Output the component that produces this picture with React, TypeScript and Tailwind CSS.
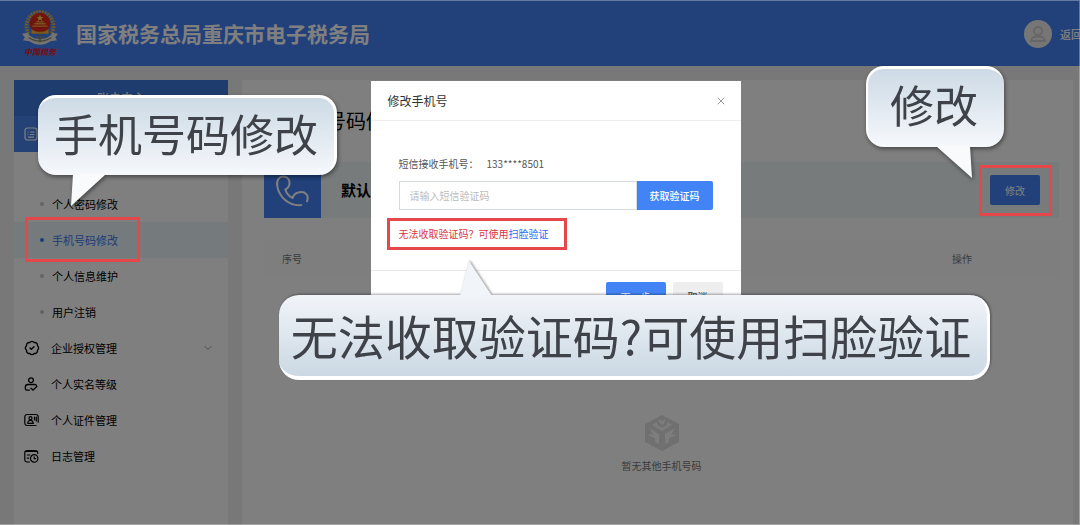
import React from "react";
import { BadgeCheck, ChevronDown, X } from "lucide-react";

function Emblem() {
  return (
    <svg viewBox="0 0 40 38" className="h-9 w-10" aria-hidden="true">
      <path d="M8 25C2 15 9 2 20 2s18 13 12 23" fill="none" stroke="#d9b35a" strokeWidth="4" strokeDasharray="2 1" />
      <circle cx="20" cy="14" r="11" fill="#e0281c" />
      <path d="M20 5l1 2.500h2.600l-2 1.600.8 2.500L20 10.100l-2.400 1.500.8-2.500-2-1.600H19z" fill="#ffd84a" />
      <path d="M12 17h16M14 14.500h12M16 12.500h8" stroke="#f5a53a" strokeWidth="1.500" />
      <path d="M11 20c4 4 14 4 18 0v5H11z" fill="#f5b830" />
      <path d="M1 25l6-1 2 3c6 5 16 5 22 0l2-3 6 1-3 4 2 3-7 1c-7 5-15 5-22 0l-7-1 2-3z" fill="#e9e9e4" />
      <path d="M8 29c7 5 17 5 24 0M20 26v8M16 28l4 3 4-3" fill="none" stroke="#8f8a6e" strokeWidth="1.500" />
    </svg>
  );
}

function PhoneIcon() {
  return (
    <svg viewBox="12 -9 171 168" className="h-14 w-[57px]" fill="none" stroke="#ffffff" strokeWidth="6" strokeLinecap="round" strokeLinejoin="round" aria-hidden="true">
      <path d="M141 109C148 92 136 78 118 82C106 84 100 91 98 99C89 95 80 86 76 74C94 64 92 39 74 35C58 32 48 46 52 64C57 96 88 124 124 120" />
    </svg>
  );
}

function ListIcon() {
  return (
    <svg viewBox="0 0 14 14" className="size-3.5 shrink-0" fill="none" stroke="currentColor" strokeWidth="1.200" aria-hidden="true">
      <rect x="1" y="1" width="12" height="12" rx="2.500" />
      <path d="M3.500 5h1M6 5h4.500M3.500 7.500h1M6 7.500h4.500M4 10.200h6" />
    </svg>
  );
}

function PersonCheckIcon() {
  return (
    <svg viewBox="0 0 14 14" className="size-3.5 shrink-0" fill="none" stroke="currentColor" strokeWidth="1.300" strokeLinecap="round" aria-hidden="true">
      <circle cx="7" cy="3.200" r="2.400" />
      <path d="M11 7.500H4A2.700 2.700 0 0 0 1.300 10v1.500c0 1 .6 1.600 1.600 1.600H5.500M7 11.200l2 1.800 3.800-3.500M11 7.500c1 0 1.600.5 1.800 2" />
    </svg>
  );
}

function IdCardIcon() {
  return (
    <svg viewBox="0 0 15 14" className="h-3.5 w-[15px] shrink-0" fill="none" stroke="currentColor" strokeWidth="1.200" strokeLinecap="round" aria-hidden="true">
      <path d="M12 12.500H3A2.200 2.200 0 0 1 .8 10.300V3.700A2.200 2.200 0 0 1 3 1.500h9a2.200 2.200 0 0 1 2.200 2.200v5.500" />
      <circle cx="6.500" cy="5.200" r="1.500" />
      <path d="M3.800 10.300h5.400c0-2-1-3-2.700-3s-2.700 1-2.700 3zM10.500 4v3M12.300 4v4" />
    </svg>
  );
}

function LogIcon() {
  return (
    <svg viewBox="0 0 15 14" className="h-3.5 w-[15px] shrink-0" fill="none" stroke="currentColor" strokeWidth="1.200" strokeLinecap="round" aria-hidden="true">
      <path d="M5.500 13H3A2.200 2.200 0 0 1 .8 10.800V3.700A2.200 2.200 0 0 1 3 1.500h8.500a2.200 2.200 0 0 1 2.200 2.200v.8M.8 2.500h12.900M3.300 6h2.500M3.300 9.200h1.400" />
      <circle cx="10.200" cy="9.400" r="3.700" />
      <path d="M10.200 7.800v1.800h1.500" />
    </svg>
  );
}

function EmptyBox() {
  return (
    <svg viewBox="0 0 36 38" className="h-[38px] w-9" aria-hidden="true">
      <path d="M18 1l17 9v18l-17 9-17-9V10z" fill="#e0e0e0" />
      <path d="M18 11l-3-3v-3l3 2 3-2v3zM8 11l5-3v3l5 3 5-3V8l5 3-10 6zM5 14l10 6v10l-4-2v-4l-6-2v-2l4 1zM31 14l-10 6v10l4-2v-4l6-2v-2l-4 1z" fill="#fafafa" />
    </svg>
  );
}

const subItems = ["个人密码修改", "手机号码修改", "个人信息维护", "用户注销"];

const groups = [
  { label: "企业授权管理", icon: <BadgeCheck className="size-4 shrink-0" />, more: true },
  { label: "个人实名等级", icon: <PersonCheckIcon />, more: false },
  { label: "个人证件管理", icon: <IdCardIcon />, more: false },
  { label: "日志管理", icon: <LogIcon />, more: false },
];

function Header() {
  return (
    <header className="flex h-[66px] items-center bg-[#4482f4] pt-0.5 pl-5 text-white">
      <div className="flex flex-col items-center">
        <Emblem />
        <span className="text-[8px] leading-3 font-bold text-[#e02020] italic">中国税务</span>
      </div>
      <h1 className="flex-1 pl-4 text-[21px] font-bold whitespace-nowrap">国家税务总局重庆市电子税务局</h1>
      <div className="flex size-7 items-center justify-center rounded-full bg-[#ececec]">
        <svg viewBox="0 0 18 18" className="size-[18px]" fill="none" stroke="#cccccc" strokeWidth="1.800" aria-hidden="true">
          <circle cx="9" cy="6" r="4" />
          <path d="M2 16c.5-3 3-4.500 5-4.500h4c2 0 4.500 1.500 5 4.500z" />
        </svg>
      </div>
      <a href="#" className="ml-2 w-5 overflow-hidden text-[11px] font-medium whitespace-nowrap">返回</a>
    </header>
  );
}

function Sidebar() {
  return (
    <aside className="w-[214px] shrink-0 bg-white text-[11px] text-black">
      <h2 className="flex h-9 items-center justify-center bg-[#3f78dc] text-xs leading-4 font-medium text-white">账户中心</h2>
      <div className="flex h-9 items-center bg-[#4a84ee] pl-2.5 text-white">
        <ListIcon />
      </div>
      <nav className="pt-[34px]">
        {subItems.map((label) => {
          const active = label === "手机号码修改";
          return (
            <a
              key={label}
              href="#"
              className={
                active
                  ? "flex h-9 items-center gap-2 bg-[#eaf4fb] pl-[26px] text-[#3b78f0]"
                  : "flex h-9 items-center gap-2 pl-[26px]"
              }
            >
              <i className={active ? "size-1 rounded-full bg-[#3b78f0]" : "size-1 rounded-full bg-[#c8c8c8]"} />
              {label}
            </a>
          );
        })}
        {groups.map((group) => (
          <a key={group.label} href="#" className="flex h-9 items-center pr-3.5 pl-2.5">
            <span className="flex w-[27px]">{group.icon}</span>
            <span className="flex-1">{group.label}</span>
            {group.more && <ChevronDown className="size-3 text-[#999999]" />}
          </a>
        ))}
      </nav>
    </aside>
  );
}

function PhonePanel() {
  return (
    <main className="min-w-0 flex-1 bg-white pr-3.5 pl-[22px] text-black">
      <h2 className="flex h-[82px] items-center pl-[22px] text-xl">手机号码修改</h2>
      <section className="flex items-center bg-[#eef6f8] pr-[19px]">
        <div className="bg-[#4482f4]">
          <PhoneIcon />
        </div>
        <p className="flex-1 pl-5 text-[15px] font-bold">默认手机号码</p>
        <button type="button" className="h-[30px] w-[50px] rounded-xs bg-[#4482f4] text-[10px] text-white">修改</button>
      </section>
      <table className="mt-[22px] w-full table-fixed text-left text-[10px] text-[#777777]">
        <thead className="bg-[#fcfcfc]">
          <tr className="h-9">
            <th className="pl-[18px] font-normal">序号</th>
            <th className="w-[107px] font-normal">操作</th>
          </tr>
        </thead>
      </table>
      <div className="flex flex-col items-center gap-1 pt-[138px] text-[10px] leading-5 text-[#777777]">
        <EmptyBox />
        暂无其他手机号码
      </div>
    </main>
  );
}

function PhoneDialog() {
  return (
    <div role="dialog" aria-labelledby="dialog-title" className="w-[370px] bg-white text-[10px] text-[#555555]">
      <div className="flex h-10 items-center justify-between border-b border-[#eeeeee] pr-3.5 pl-[17px]">
        <h2 id="dialog-title" className="text-xs text-[#333333]">修改手机号</h2>
        <button type="button" aria-label="关闭" className="text-[#999999]">
          <X className="size-3" strokeWidth={2} />
        </button>
      </div>
      <div className="flex h-[149px] flex-col px-7 pt-[33px]">
        <div className="flex gap-2 leading-5">
          <label htmlFor="code">短信接收手机号：</label>
          <span>133****8501</span>
        </div>
        <div className="mt-[7px] flex h-[29px]">
          <input
            id="code"
            placeholder="请输入短信验证码"
            className="min-w-0 flex-1 border border-[#d5d9e0] px-2.5 outline-none placeholder:text-[#bbbbbb]"
          />
          <button type="button" className="w-[76px] rounded-r-xs bg-[#4284f5] font-medium text-white">获取验证码</button>
        </div>
        <p className="pt-3.5 leading-5 text-[#d9363e]">
          无法收取验证码？可使用
          <a href="#" className="text-[#2f6df6]">扫脸验证</a>
        </p>
      </div>
      <div className="flex justify-end gap-[7px] border-t border-[#e8e8e8] px-[18px] py-[11px] text-[10px]">
        <button type="button" className="h-7 w-[60px] rounded-xs bg-[#4284f5] text-white">下一步</button>
        <button type="button" className="h-7 w-[50px] rounded-xs bg-[#eeeeee] text-[#333333]">取消</button>
      </div>
    </div>
  );
}

function Annotations() {
  return (
    <div className="leading-none whitespace-nowrap text-[#3f4349]">
      <div className="absolute top-[217px] left-[25px] h-[45px] w-[115px] border-[3px] border-[#e5484b]" />
      <div className="absolute top-[165px] right-7 h-[51px] w-[73px] border-[3px] border-[#e5484b]" />
      <div className="absolute top-[218px] left-[387px] h-8 w-[180px] border-[3px] border-[#e5484b]" />

      <div className="absolute top-[95px] left-[38px] drop-shadow-[1px_2px_2px_rgba(0,0,0,0.45)]">
        <div className="flex h-20 w-[299px] items-center justify-center rounded-[18px] border-t-3 border-r-3 border-white bg-linear-to-b from-[#cddae5] to-[#f6f8fc] pb-2">
          <span className="text-[44px]">手机号码修改</span>
        </div>
        <svg viewBox="0 0 36 32" className="absolute top-[79px] left-8 h-8 w-9" aria-hidden="true">
          <path d="M3 0h33L1 32z" fill="#f8fafc" />
        </svg>
      </div>

      <div className="absolute top-[66px] right-[76px] drop-shadow-[1px_2px_2px_rgba(0,0,0,0.45)]">
        <div className="flex h-[81px] w-[138px] items-center justify-center rounded-[18px] border-t-3 border-l-2 border-white bg-linear-to-b from-[#cddae5] to-[#f6f8fc] pr-1 pb-2">
          <span className="text-[44px]">修改</span>
        </div>
        <svg viewBox="0 0 36 32" className="absolute top-20 right-8 h-8 w-9" aria-hidden="true">
          <path d="M0 0h34l2 32z" fill="#f8fafc" />
        </svg>
      </div>

      <div className="absolute top-[295px] left-[279px] drop-shadow-[1px_-1px_1px_rgba(0,0,0,0.35)]">
        <svg viewBox="0 0 32 35" className="absolute -top-[34px] left-[181px] h-[35px] w-8" aria-hidden="true">
          <path d="M0 35L9 0l23 35z" fill="#f1f4f9" />
        </svg>
        <div className="flex h-[85px] w-[711px] items-center justify-center rounded-[20px] border-r-3 border-b-4 border-white bg-linear-to-b from-[#f1f4f9] to-[#cbd8e3] pr-1 pb-0.5">
          <span className="text-[47px]">无法收取验证码?可使用扫脸验证</span>
        </div>
      </div>
    </div>
  );
}

export default function App() {
  return (
    <div className="relative flex min-h-screen flex-col overflow-hidden bg-[#f0f0f3] font-['Noto_Sans_CJK_SC',sans-serif]">
      <Header />
      <div className="flex flex-1 gap-3.5 pt-3.5 pr-[7px] pl-3.5">
        <Sidebar />
        <PhonePanel />
      </div>
      <div className="absolute inset-0 flex items-start justify-center border-t border-r border-b border-white/30 bg-black/50 pt-20 pl-8">
        <PhoneDialog />
      </div>
      <Annotations />
    </div>
  );
}
